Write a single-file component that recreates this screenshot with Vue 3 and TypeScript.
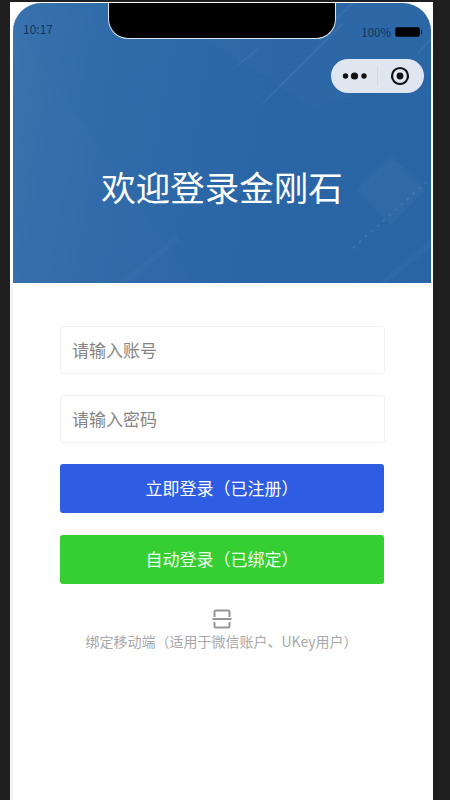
<script setup lang="ts">
const fields = ['请输入账号', '请输入密码']
</script>

<template>
  <div class="page">
    <div class="phone">
      <header class="hero">
        <!-- faint diagonal artwork behind the title -->
        <svg class="hero__art" viewBox="0 0 418 280" width="418" height="280" aria-hidden="true">
          <path d="M0 20 L180 280 H0 Z" fill="#fff" opacity="0.012" />
          <path d="M135 0 L300 105 L418 70 V0 Z" fill="#fff" opacity="0.015" />
          <path d="M343 187 L378 153 L412 187 L378 222 Z" fill="#fff" opacity="0.03" />
          <path d="M225 62 L245 46 M300 38 L340 0 M250 100 L330 20 M405 50 L418 36" stroke="#fff" stroke-opacity="0.05" stroke-width="2" fill="none" />
          <path d="M340 245 L418 175" stroke="#fff" stroke-opacity="0.09" stroke-width="2" stroke-dasharray="3 5" fill="none" />
          <path d="M110 280 L165 235 M370 280 L418 240" stroke="#fff" stroke-opacity="0.025" stroke-width="6" fill="none" />
        </svg>

        <div class="status">
          <span>10:17</span>
          <span class="status__right">
            100%
            <span class="battery"><span class="battery__fill" /></span>
          </span>
        </div>

        <div class="notch" />

        <div class="capsule">
          <svg width="26" height="10" viewBox="0 0 26 10" aria-hidden="true">
            <circle cx="3.5" cy="5" r="2.7" fill="#111" />
            <circle cx="12.5" cy="5" r="3.6" fill="#111" />
            <circle cx="22" cy="5" r="2.7" fill="#111" />
          </svg>
          <span class="capsule__sep" />
          <svg width="20" height="20" viewBox="0 0 20 20" aria-hidden="true">
            <circle cx="10" cy="10" r="8" fill="none" stroke="#111" stroke-width="2.2" />
            <circle cx="10" cy="10" r="3.4" fill="#111" />
          </svg>
        </div>

        <h1 class="hero__title">欢迎登录金刚石</h1>
      </header>

      <main class="form">
        <input
          v-for="field in fields"
          :key="field"
          class="form__input"
          type="text"
          :placeholder="field"
        />
        <button class="form__btn form__btn--blue" type="button">立即登录（已注册）</button>
        <button class="form__btn form__btn--green" type="button">自动登录（已绑定）</button>

        <div class="bind">
          <svg width="20" height="20" viewBox="0 0 20 20" aria-hidden="true">
            <path
              d="M2.500 8 V3 Q2.500 1.500 4 1.500 H16 Q17.500 1.500 17.500 3 V8 M2.500 13 V17 Q2.500 18.500 4 18.500 H16 Q17.500 18.500 17.500 17 V13"
              fill="none"
              stroke="#969696"
              stroke-width="2"
            />
            <path d="M0.500 10 H19.500" stroke="#969696" stroke-width="2" />
          </svg>
          <span class="bind__text">绑定移动端（适用于微信账户、UKey用户）</span>
        </div>
      </main>
    </div>
  </div>
</template>

<style>
html,
body {
  margin: 0;
  background: #1f1f1f;
}
</style>

<style scoped>
.page {
  width: 450px;
  height: 800px;
  overflow: hidden;
  background: #1f1f1f;
  padding: 2px 0 0 10px;
  box-sizing: border-box;
  font-family: "Noto Sans CJK SC", "Liberation Sans", sans-serif;
}
.phone {
  width: 423px;
  height: 798px;
  box-sizing: border-box;
  background: #fff;
  padding: 1px 2px 0 3px;
  display: flex;
  flex-direction: column;
}
.hero {
  position: relative;
  height: 280px;
  flex: none;
  border-radius: 28px 28px 0 0;
  overflow: hidden;
  background: linear-gradient(100deg, #3873ae 0%, #2f6aa9 25%, #2a65a6 60%, #2965a4 100%);
  display: flex;
  align-items: center;
  justify-content: center;
}
.hero__art {
  position: absolute;
  left: 0;
  top: 0;
}
.hero__title {
  position: relative;
  margin: 88px 0 0;
  font-size: 34.500px;
  font-weight: 400;
  line-height: 1.2;
  color: #fff;
}
.status {
  position: absolute;
  top: 18px;
  left: 10px;
  right: 11px;
  display: flex;
  justify-content: space-between;
  align-items: flex-start;
  font-size: 12px;
  line-height: 16px;
  color: #17345a;
}
.status__right {
  display: flex;
  align-items: center;
  gap: 4px;
  margin-top: 3px;
  font-size: 11.500px;
}
.battery {
  position: relative;
  width: 25px;
  height: 10px;
  box-sizing: border-box;
  border: 1px solid #0c1a30;
  border-radius: 2px;
  display: flex;
}
.battery::after {
  content: "";
  position: absolute;
  right: -3px;
  top: 2px;
  width: 1.500px;
  height: 4px;
  background: #0c1a30;
}
.battery__fill {
  flex: 1;
  background: #000;
}
.notch {
  position: absolute;
  top: -1px;
  left: 95px;
  width: 228px;
  height: 37px;
  box-sizing: border-box;
  background: #000;
  border: 1px solid #dfe7ee;
  border-top: 0;
  border-radius: 0 0 20px 20px;
}
.capsule {
  position: absolute;
  top: 56px;
  left: 318px;
  width: 93px;
  height: 34px;
  border-radius: 17px;
  background: #e0e6f0;
  display: flex;
  align-items: center;
  box-sizing: border-box;
  padding: 0 14px 0 11px;
  justify-content: space-between;
}
.capsule__sep {
  width: 1px;
  height: 20px;
  margin-right: 4px;
  background: #d3dae6;
}
.form {
  flex: 1;
  display: flex;
  flex-direction: column;
  margin-left: -3px;
  border-left: 3px solid #f5f5f5;
  padding: 43px 46px 0 47px;
}
.form__input {
  height: 48px;
  box-sizing: border-box;
  border: 1px solid #f0f0f0;
  border-radius: 3px;
  background: #fff;
  padding: 0 11px 2px;
  margin-bottom: 21px;
  font: inherit;
  font-size: 17px;
  outline: none;
}
.form__input::placeholder {
  color: #858585;
  opacity: 1;
}
.form__btn {
  height: 49px;
  width: 324px;
  border: 0;
  border-radius: 3px;
  margin-bottom: 22px;
  color: #fff;
  font: inherit;
  font-size: 17px;
  padding: 0 0 2px;
}
.form__btn--blue {
  background: #2e5ce2;
}
.form__btn--green {
  background: #35cf34;
  color: #eefbea;
}
.bind {
  display: flex;
  flex-direction: column;
  align-items: center;
  gap: 2px;
  margin-top: 3px;
  padding-right: 2px;
}
.bind__text {
  font-size: 14px;
  line-height: 20px;
  color: #a8a8a8;
}
</style>
